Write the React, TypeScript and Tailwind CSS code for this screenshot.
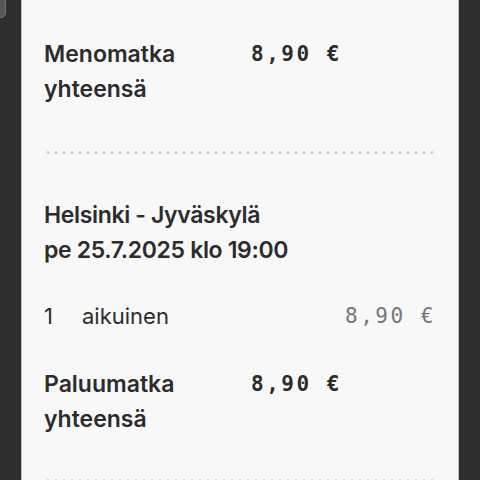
export default function App() {
  const sans = "font-['Inter','Noto_Sans',sans-serif]";
  const mono = "font-['DejaVu_Sans_Mono','Liberation_Mono',monospace] text-[21px]";

  const Dots = () => (
    <div className="h-[3px] w-full bg-[radial-gradient(circle,#cfcfcf_1.4px,transparent_1.6px)] bg-[length:8px_3px]" />
  );

  return (
    <div className="relative h-[480px] w-[480px] overflow-hidden bg-[#2e2e2e]">
      <div className="absolute left-[-14px] top-[-8px] h-[26px] w-[20px] rounded-[5px] border border-[#777] bg-[#565656]" />
      <div
        className={`mx-auto h-full w-[438px] border-x border-[#b9b9b9] bg-[#f8f8f8] px-[22px] text-[#2c2c2c] ${sans}`}
      >
        <div className="flex pt-[37px] text-[23px] leading-[35px] font-semibold">
          <div className="w-[207px]">
            Menomatka
            <br />
            yhteensä
          </div>
          <div className={`${mono} font-bold tracking-[0.12em]`}>8,90 €</div>
        </div>

        <div className="mt-[44px]">
          <Dots />
        </div>

        <div className="mt-[44px] text-[23px] leading-[35px] font-semibold tracking-[-0.015em]">
          <div>Helsinki - Jyväskylä</div>
          <div>pe 25.7.2025 klo 19:00</div>
        </div>

        <div className="mt-[31px] flex items-center text-[22px] leading-[35px]">
          <span className="w-[38px]">1</span>
          <span className="flex-1">aikuinen</span>
          <span className={`${mono} tracking-[0.12em] text-[#777]`}>8,90 €</span>
        </div>

        <div className="mt-[33px] flex text-[23px] leading-[35px] font-semibold">
          <div className="w-[207px]">
            Paluumatka
            <br />
            yhteensä
          </div>
          <div className={`${mono} font-bold tracking-[0.12em]`}>8,90 €</div>
        </div>

        <div className="mt-[42px]">
          <Dots />
        </div>
      </div>
    </div>
  );
}
